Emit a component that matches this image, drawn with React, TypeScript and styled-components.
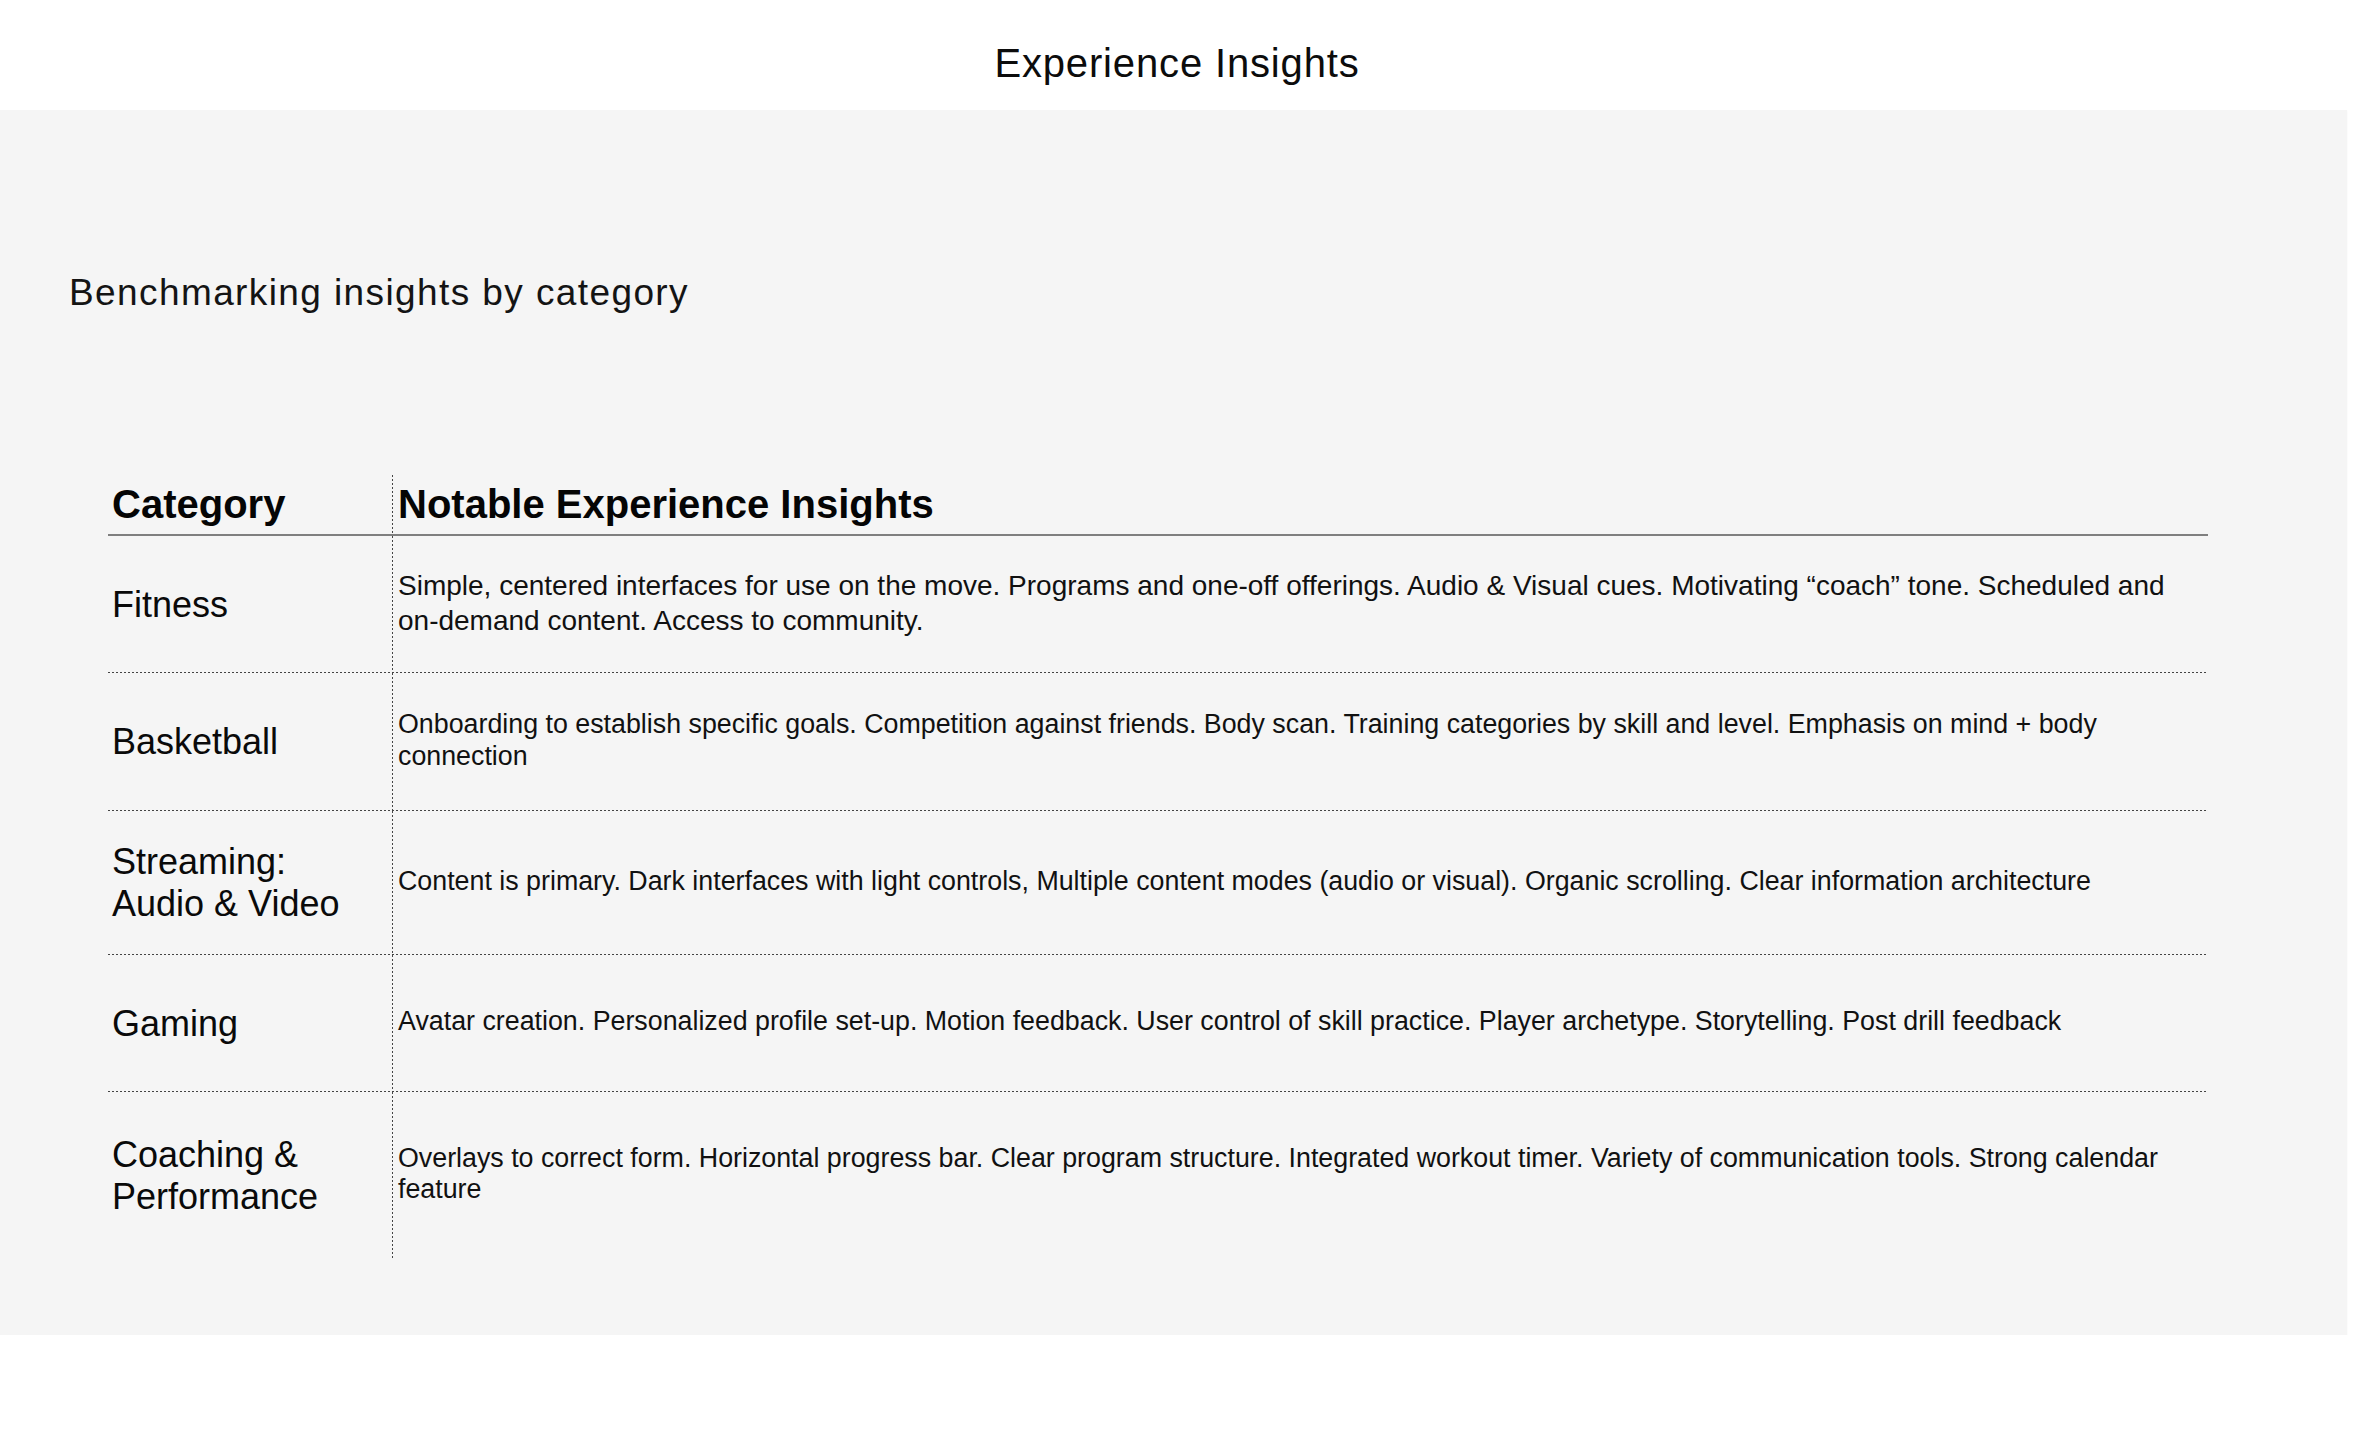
import React from "react";
import styled, { createGlobalStyle } from "styled-components";

const GlobalStyle = createGlobalStyle`
  html, body {
    margin: 0;
    padding: 0;
    background: #ffffff;
  }
  body {
    font-family: "Liberation Sans", Arial, Helvetica, sans-serif;
    color: #111111;
  }
  * {
    box-sizing: border-box;
  }
`;

const dotsH = "repeating-linear-gradient(90deg, #444444 0 2px, transparent 2px 4px)";
const dotsV = "repeating-linear-gradient(180deg, #444444 0 2px, transparent 2px 4px)";

const TopBar = styled.header`
  height: 110px;
  padding-top: 40px;
  text-align: center;
  background: #ffffff;
`;

const PageTitle = styled.h1`
  margin: 0;
  font-size: 40px;
  line-height: 46px;
  font-weight: 400;
  letter-spacing: 0.85px;
  color: #0c0c0c;
`;

const Board = styled.section`
  width: calc(100% - 7px);
  padding: 162px 0 76px 69px;
  background: #f5f5f5;
  box-shadow: 0 1px 2px rgba(0, 0, 0, 0.04);
`;

const Subtitle = styled.h2`
  margin: 0;
  font-size: 37px;
  line-height: 42px;
  font-weight: 400;
  letter-spacing: 1.4px;
  color: #141414;
`;

const Table = styled.div`
  margin: 161px 0 0 39px;
  width: 2100px;
  display: flex;
  flex-direction: column;
`;

const HeadRow = styled.div`
  display: grid;
  grid-template-columns: 285px 1fr;
  border-bottom: 2px solid #7f7f7f;
`;

const HeadCell = styled.div<{ $first?: boolean }>`
  padding: 6px 0 7px ${(p) => (p.$first ? "4px" : "5px")};
  font-size: 40px;
  line-height: 46px;
  font-weight: 700;
  color: #050505;
  background: ${(p) => (p.$first ? `${dotsV} right top / 1px 100% no-repeat` : "none")};
`;

const Row = styled.div<{ $height: number; $last?: boolean }>`
  display: grid;
  grid-template-columns: 285px 1fr;
  height: ${(p) => p.$height}px;
  background: ${(p) => (p.$last ? "none" : `${dotsH} left bottom / 100% 1px no-repeat`)};
`;

const CategoryCell = styled.div`
  display: flex;
  align-items: center;
  padding-left: 4px;
  font-size: 36px;
  line-height: 42px;
  font-weight: 400;
  color: #0a0a0a;
  background: ${dotsV} right top / 1px 100% no-repeat;
`;

const InsightCell = styled.div<{ $size: number; $lineHeight: number }>`
  display: flex;
  align-items: center;
  padding: 0 0 3px 5px;
  font-size: ${(p) => p.$size}px;
  line-height: ${(p) => p.$lineHeight}px;
  color: #111111;
`;

interface Insight {
  category: string[];
  text: string;
  height: number;
  size: number;
  lineHeight: number;
}

const insights: Insight[] = [
  {
    category: ["Fitness"],
    text: "Simple, centered interfaces for use on the move. Programs and one-off offerings. Audio & Visual cues. Motivating \u201Ccoach\u201D tone. Scheduled and on-demand content. Access to community.",
    height: 137,
    size: 28,
    lineHeight: 35,
  },
  {
    category: ["Basketball"],
    text: "Onboarding to establish specific goals. Competition against friends. Body scan. Training categories by skill and level. Emphasis on mind + body connection",
    height: 138,
    size: 26.8,
    lineHeight: 31.5,
  },
  {
    category: ["Streaming:", "Audio & Video"],
    text: "Content is primary. Dark interfaces with light controls, Multiple content modes (audio or visual). Organic scrolling. Clear information architecture",
    height: 144,
    size: 26.8,
    lineHeight: 31.5,
  },
  {
    category: ["Gaming"],
    text: "Avatar creation. Personalized profile set-up. Motion feedback. User control of skill practice. Player archetype. Storytelling. Post drill feedback",
    height: 137,
    size: 26.8,
    lineHeight: 31.5,
  },
  {
    category: ["Coaching &", "Performance"],
    text: "Overlays to correct form. Horizontal progress bar. Clear program structure. Integrated workout timer. Variety of communication tools. Strong calendar feature",
    height: 167,
    size: 26.8,
    lineHeight: 31.5,
  },
];

const App: React.FC = () => {
  return (
    <>
      <GlobalStyle />
      <TopBar>
        <PageTitle>Experience Insights</PageTitle>
      </TopBar>
      <Board>
        <Subtitle>Benchmarking insights by category</Subtitle>
        <Table>
          <HeadRow>
            <HeadCell $first>Category</HeadCell>
            <HeadCell>Notable Experience Insights</HeadCell>
          </HeadRow>
          {insights.map((item, i) => (
            <Row key={item.category.join(" ")} $height={item.height} $last={i === insights.length - 1}>
              <CategoryCell>
                <div>
                  {item.category.map((line) => (
                    <div key={line}>{line}</div>
                  ))}
                </div>
              </CategoryCell>
              <InsightCell $size={item.size} $lineHeight={item.lineHeight}>
                <div>{item.text}</div>
              </InsightCell>
            </Row>
          ))}
        </Table>
      </Board>
    </>
  );
};

export default App;
